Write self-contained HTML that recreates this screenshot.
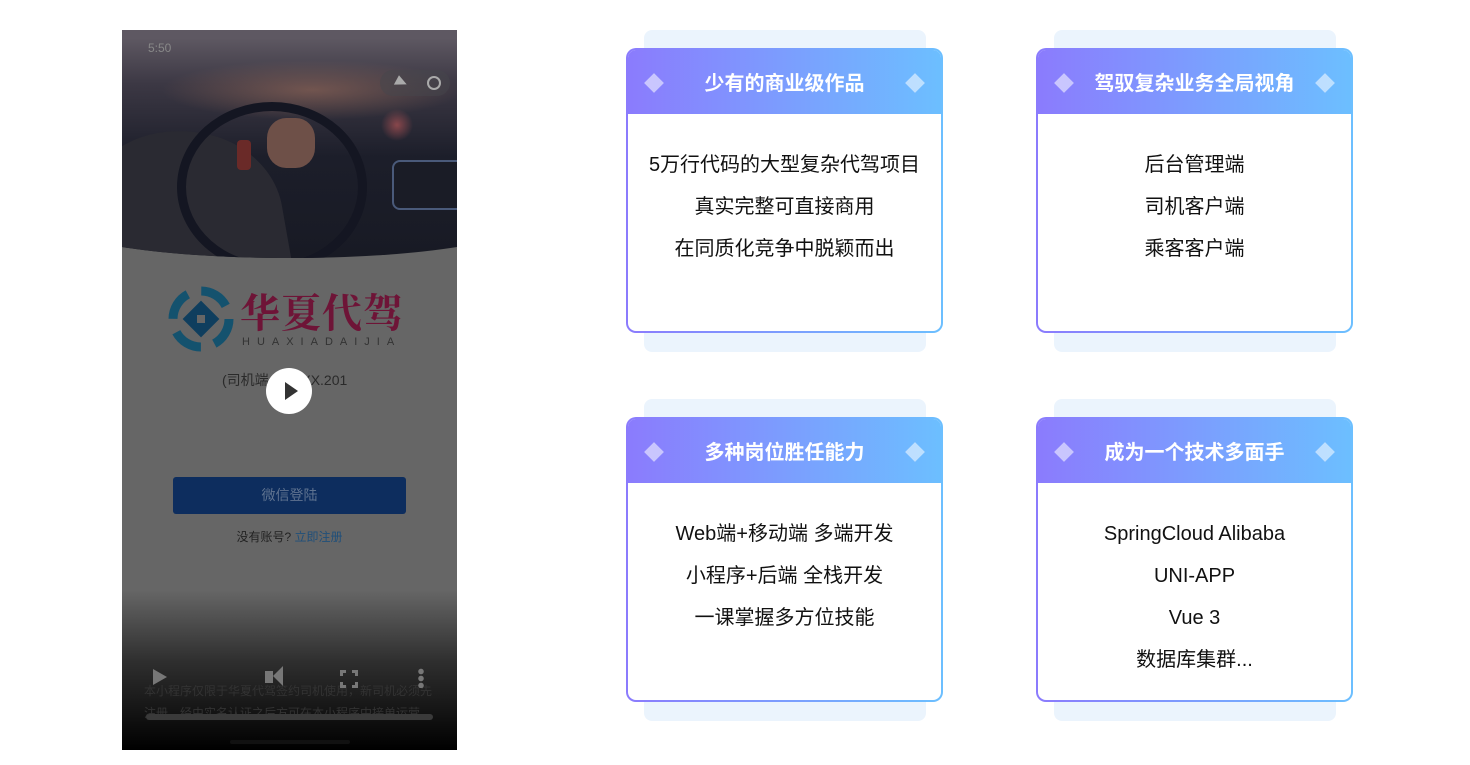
<!DOCTYPE html>
<html><head><meta charset="utf-8"><style>
*{margin:0;padding:0;box-sizing:border-box}
body{width:1470px;height:765px;background:#fff;position:relative;overflow:hidden;font-family:"Liberation Sans","Noto Sans CJK SC",sans-serif}
.phone{position:absolute;left:122px;top:30px;width:335px;height:720px;background:#666;overflow:hidden}
.photo{position:absolute;left:-60px;top:-230px;width:455px;height:458px;border-radius:0 0 50% 50%/0 0 34px 34px;overflow:hidden;
background:radial-gradient(ellipse 16px 16px at 335px 325px,rgba(200,90,90,.6),transparent),radial-gradient(ellipse 150px 30px at 250px 290px,rgba(160,110,90,.55),transparent),linear-gradient(180deg,#56525c 0%,#5e5862 52%,#3c3844 62%,#1c1e2a 78%,#181a24 100%)}
.wheel{position:absolute;left:115px;top:302px;width:190px;height:170px;border:9px solid #141622;border-radius:50%}
.arm{position:absolute;left:20px;top:330px;width:200px;height:170px;background:#2a2a32;border-radius:45% 55% 0 0;transform:rotate(-10deg)}
.hand{position:absolute;left:205px;top:318px;width:48px;height:50px;background:#6e5048;border-radius:40%}
.cuff{position:absolute;left:175px;top:340px;width:14px;height:30px;background:#6a2a28;border-radius:4px}
.dash{position:absolute;left:330px;top:360px;width:125px;height:50px;border:2px solid #4a5a7a;border-radius:8px;background:#1a1c26}
.bottom{position:absolute;left:0;top:560px;width:335px;height:160px;background:linear-gradient(180deg,rgba(0,0,0,0),rgba(0,0,0,.55) 45%,#000)}
.cardback{position:absolute;width:282px;height:322px;background:#ebf4fd;border-radius:8px}
.card{position:absolute;width:317px;height:285px;border-radius:10px;padding:2px;background:linear-gradient(90deg,#8b7bfd,#6cbfff)}
.card .in{width:100%;height:100%;background:#fff;border-radius:8px;overflow:hidden}
.hd{height:66px;margin:-2px -2px 0;background:linear-gradient(90deg,#8b7bfd,#6cbfff);position:relative;color:#fff;font-weight:bold;font-size:20px;text-align:center;line-height:72px}
.hd:before,.hd:after{content:"";position:absolute;top:28px;width:14px;height:14px;background:rgba(255,255,255,.55);transform:rotate(45deg)}
.hd:before{left:21px}.hd:after{right:21px}
.bd{text-align:center;font-size:20px;color:#111;padding-top:30px;line-height:42px}
</style></head><body>
<div class="phone">
 <div class="photo"><div class="arm"></div><div class="wheel"></div><div class="cuff"></div><div class="hand"></div><div class="dash"></div></div>
 <div style="position:absolute;left:26px;top:11px;color:#888;font-size:12px">5:50</div>
 <div style="position:absolute;left:258px;top:40px;width:70px;height:26px;border-radius:13px;background:rgba(70,70,75,.5)"></div>
 <div style="position:absolute;left:272px;top:47px;width:0;height:0;border-right:10px solid #aaa;border-top:4px solid transparent;border-bottom:8px solid transparent;transform:rotate(-40deg)"></div>
 <div style="position:absolute;left:305px;top:46px;width:14px;height:14px;border:2px solid #aaa;border-radius:50%"></div>
 <svg style="position:absolute;left:46px;top:256px" width="66" height="66" viewBox="0 0 66 66">
  <circle cx="33" cy="33" r="28" fill="none" stroke="#14526e" stroke-width="9" stroke-dasharray="30 14"/>
  <rect x="20" y="20" width="26" height="26" fill="#0f3e5e" transform="rotate(45 33 33)"/>
  <rect x="29" y="29" width="8" height="8" fill="#666"/>
 </svg>
 <div style="position:absolute;left:118px;top:252px;font-size:40px;font-weight:bold;color:#6e1437;font-family:'Noto Serif CJK SC',serif;letter-spacing:1px">华夏代驾</div>
 <div style="position:absolute;left:120px;top:306px;font-size:11px;letter-spacing:7px;color:#333">HUAXIADAIJIA</div>
 <div style="position:absolute;left:100px;top:340px;font-size:14px;color:#2a2a2a">(司机端 V 20XX.201</div>
 <div style="position:absolute;left:144px;top:338px;width:46px;height:46px;border-radius:50%;background:#fff"></div>
 <div style="position:absolute;left:163px;top:352px;width:0;height:0;border-left:13px solid #333;border-top:9px solid transparent;border-bottom:9px solid transparent"></div>
 <div style="position:absolute;left:51px;top:447px;width:233px;height:37px;background:#0d2d5e;border-radius:3px;color:#5f7390;font-size:14px;text-align:center;line-height:37px">微信登陆</div>
 <div style="position:absolute;left:0;width:335px;top:498px;text-align:center;font-size:12px;color:#222">没有账号? <span style="color:#1f4f7a">立即注册</span></div>
 <div class="bottom"></div>
 <div style="position:absolute;left:22px;top:650px;font-size:12px;color:#333;width:300px;line-height:22px;white-space:nowrap;overflow:hidden">本小程序仅限于华夏代驾签约司机使用，新司机必须先<br>注册，经由实名认证之后方可在本小程序中接单运营。</div>
 <div style="position:absolute;left:31px;top:639px;border-left:14px solid #777;border-top:8px solid transparent;border-bottom:8px solid transparent"></div>
 <div style="position:absolute;left:143px;top:641px;width:8px;height:12px;background:#777"></div>
 <div style="position:absolute;left:151px;top:636px;border-right:10px solid #777;border-top:10px solid transparent;border-bottom:10px solid transparent"></div>
 <div style="position:absolute;left:218px;top:640px;width:18px;height:18px;border:3px dashed #777"></div>
 <div style="position:absolute;left:296px;top:638px;width:6px;height:20px;background:radial-gradient(circle,#777 2.5px,transparent 3px) 0 0/6px 7px"></div>
 <div style="position:absolute;left:24px;top:684px;width:287px;height:6px;border-radius:3px;background:#3a3a3a"></div>
 <div style="position:absolute;left:108px;top:710px;width:120px;height:4px;border-radius:2px;background:#111"></div>
</div>

<div class="cardback" style="left:644px;top:30px"></div>
<div class="card" style="left:626px;top:48px"><div class="in"><div class="hd">少有的商业级作品</div><div class="bd">5万行代码的大型复杂代驾项目<br>真实完整可直接商用<br>在同质化竞争中脱颖而出</div></div></div>
<div class="cardback" style="left:1054px;top:30px"></div>
<div class="card" style="left:1036px;top:48px"><div class="in"><div class="hd">驾驭复杂业务全局视角</div><div class="bd">后台管理端<br>司机客户端<br>乘客客户端</div></div></div>
<div class="cardback" style="left:644px;top:399px"></div>
<div class="card" style="left:626px;top:417px"><div class="in"><div class="hd">多种岗位胜任能力</div><div class="bd">Web端+移动端 多端开发<br>小程序+后端 全栈开发<br>一课掌握多方位技能</div></div></div>
<div class="cardback" style="left:1054px;top:399px"></div>
<div class="card" style="left:1036px;top:417px"><div class="in"><div class="hd">成为一个技术多面手</div><div class="bd">SpringCloud Alibaba<br>UNI-APP<br>Vue 3<br>数据库集群...</div></div></div>
</body></html>
